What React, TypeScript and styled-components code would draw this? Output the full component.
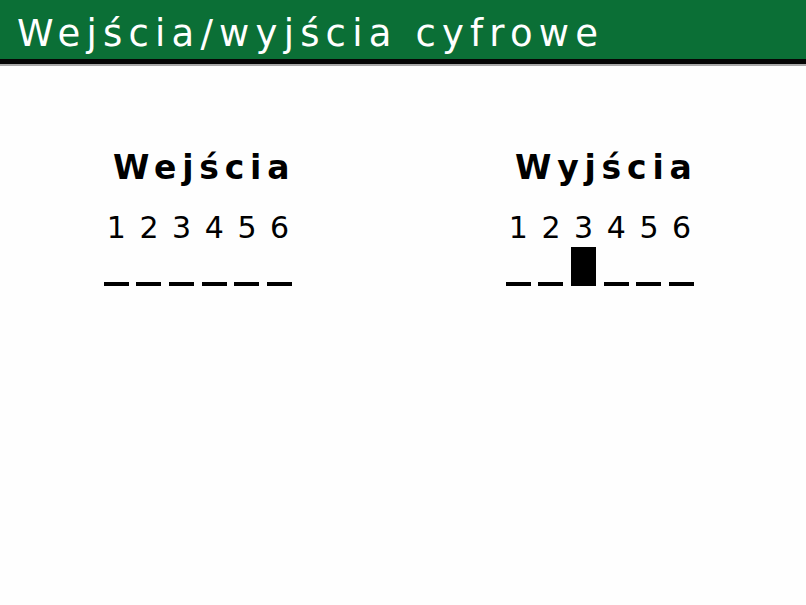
import React from 'react';
import styled, { createGlobalStyle } from 'styled-components';

const GlobalStyle = createGlobalStyle`
  html, body {
    margin: 0;
    padding: 0;
    background: #fefefe;
  }
  body {
    font-family: "DejaVu Sans", Verdana, sans-serif;
  }
`;

const Screen = styled.div`
  width: 806px;
  height: 605px;
  background: #fefefe;
  overflow: hidden;
`;

const Header = styled.div`
  height: 59px;
  background: #0b6f36;
  border-bottom: 5px solid #050505;
  box-shadow: 0 2px 0 #a8a8a8;
  display: flex;
  align-items: center;
  padding-left: 17px;
`;

const HeaderTitle = styled.h1`
  margin: 0;
  font-family: "DejaVu Sans", Verdana, sans-serif;
  font-weight: normal;
  font-size: 37px;
  letter-spacing: 6.2px;
  color: #ffffff;
  line-height: 1;
  margin-top: 8px;
`;

const Panels = styled.div`
  display: flex;
  gap: 206px;
  padding: 82px 0 0 100px;
`;

const Panel = styled.section`
  width: 196px;
  display: flex;
  flex-direction: column;
  align-items: stretch;
`;

const PanelTitle = styled.h2`
  margin: 0 0 0 13px;
  font-family: "DejaVu Sans", Verdana, sans-serif;
  font-weight: bold;
  font-size: 33px;
  letter-spacing: 5.8px;
  line-height: 44px;
  color: #000;
  white-space: nowrap;
`;

const Row = styled.div`
  display: grid;
  grid-template-columns: repeat(6, 1fr);
`;

const Digit = styled.span`
  text-align: center;
  font-family: "DejaVu Sans", Verdana, sans-serif;
  font-size: 30px;
  line-height: 32px;
  color: #000;
  margin-top: 22px;
`;

const Slot = styled.div`
  height: 40px;
  display: flex;
  justify-content: center;
  align-items: flex-end;
  margin-top: 2px;
`;

const Mark = styled.div<{ $on: boolean }>`
  width: 25px;
  height: ${(p) => (p.$on ? '39px' : '4px')};
  background: #000;
`;

type Props = { title: string; states: boolean[] };

function IoPanel({ title, states }: Props) {
  return (
    <Panel>
      <PanelTitle>{title}</PanelTitle>
      <Row>
        {states.map((_, i) => (
          <Digit key={i}>{i + 1}</Digit>
        ))}
      </Row>
      <Row>
        {states.map((on, i) => (
          <Slot key={i}>
            <Mark $on={on} />
          </Slot>
        ))}
      </Row>
    </Panel>
  );
}

export default function App() {
  return (
    <Screen>
      <GlobalStyle />
      <Header>
        <HeaderTitle>Wejścia/wyjścia cyfrowe</HeaderTitle>
      </Header>
      <Panels>
        <IoPanel title="Wejścia" states={[false, false, false, false, false, false]} />
        <IoPanel title="Wyjścia" states={[false, false, true, false, false, false]} />
      </Panels>
    </Screen>
  );
}
